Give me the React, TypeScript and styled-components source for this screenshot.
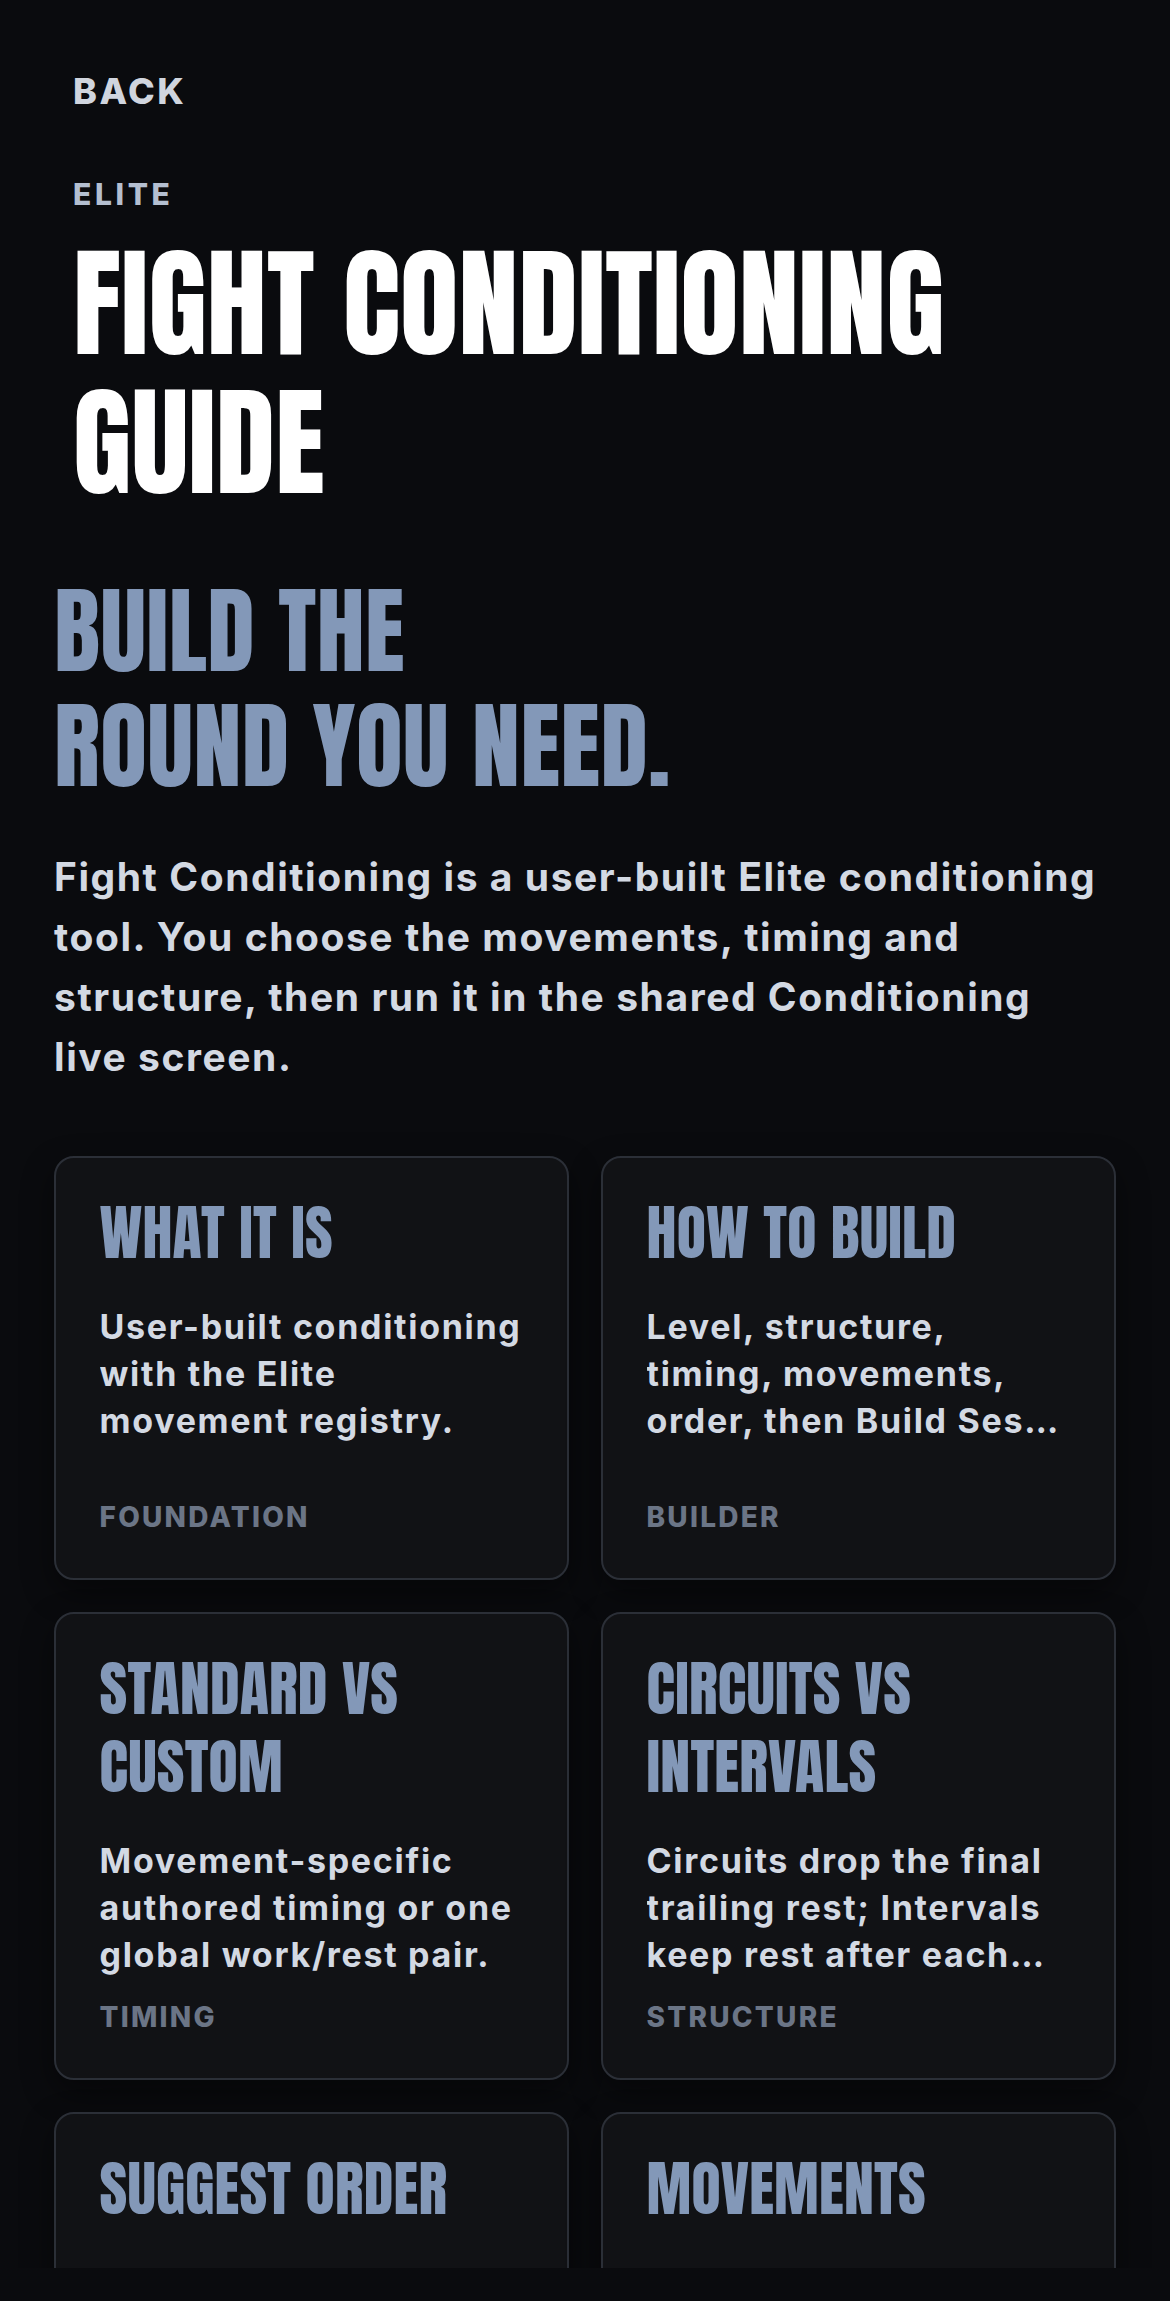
import React from 'react';
import styled, { createGlobalStyle } from 'styled-components';

const GlobalStyle = createGlobalStyle`
  html, body {
    margin: 0;
    padding: 0;
    background: #0a0b0e;
    overflow-x: hidden;
  }

  * {
    box-sizing: border-box;
  }
`;

const Screen = styled.div`
  width: 1170px;
  height: 2301px;
  background: #0a0b0e;
  display: flex;
  flex-direction: column;
  overflow: hidden;
`;

const ScrollArea = styled.main`
  height: 2268px;
  overflow: hidden;
  padding: 0 54px;
  flex: none;
`;

const SafeArea = styled.div`
  flex: 1;
  background: #0a0b0e;
`;

const Header = styled.header`
  padding: 69px 0 0 19px;
`;

const BackButton = styled.button`
  display: block;
  margin: 0;
  padding: 0;
  border: 0;
  background: none;
  font-family: Inter, 'Liberation Sans', sans-serif;
  font-weight: 800;
  font-size: 36px;
  line-height: 44px;
  letter-spacing: 0.07em;
  color: #d0d5de;
  cursor: pointer;
`;

const Eyebrow = styled.div`
  margin-top: 63px;
  font-family: Inter, 'Liberation Sans', sans-serif;
  font-weight: 800;
  font-size: 30px;
  line-height: 36px;
  letter-spacing: 0.12em;
  color: #b4bfd0;
`;

const PageTitle = styled.h1`
  margin: 22px 0 0;
  font-family: Anton, 'Oswald', 'Liberation Sans Narrow', sans-serif;
  font-weight: 400;
  font-size: 120px;
  line-height: 139px;
  letter-spacing: 0.2px;
  color: #ffffff;
  text-transform: uppercase;
`;

const Hero = styled.h2`
  margin: 61px 0 0;
  font-family: Anton, 'Oswald', 'Liberation Sans Narrow', sans-serif;
  font-weight: 400;
  font-size: 96px;
  line-height: 115px;
  letter-spacing: 0.5px;
  color: #8398b8;
  text-transform: uppercase;
`;

const Intro = styled.p`
  margin: 44px 0 0;
  max-width: 1050px;
  font-family: Inter, 'Liberation Sans', sans-serif;
  font-weight: 700;
  font-size: 39px;
  line-height: 60px;
  letter-spacing: 0.04em;
  color: #d3d9e3;
`;

const CardGrid = styled.section`
  margin-top: 69px;
  display: grid;
  grid-template-columns: repeat(2, minmax(0, 1fr));
  gap: 32px;
`;

const Card = styled.article`
  min-width: 0;
  min-height: 424px;
  display: flex;
  flex-direction: column;
  padding: 36px 37.5px 44px 43.5px;
  background: #111215;
  border: 2px solid #2b2f37;
  border-radius: 20px;
  box-shadow: 0 12px 32px rgba(0, 0, 0, 0.45);
`;

const CardTitle = styled.h3`
  margin: 0;
  font-family: Anton, 'Oswald', 'Liberation Sans Narrow', sans-serif;
  font-weight: 400;
  font-size: 60px;
  line-height: 78px;
  letter-spacing: 0.2px;
  color: #8398b8;
  text-transform: uppercase;
`;

const CardText = styled.p`
  margin: 31px 0 0;
  font-family: Inter, 'Liberation Sans', sans-serif;
  font-weight: 700;
  font-size: 34px;
  line-height: 47px;
  letter-spacing: 0.05em;
  color: #d3d9e3;
  display: -webkit-box;
  -webkit-box-orient: vertical;
  -webkit-line-clamp: 3;
  overflow: hidden;
  text-overflow: ellipsis;
`;

// keeps the tail of a sentence on one line so the clamp cuts it mid-word
const Unbroken = styled.span`
  white-space: nowrap;
`;

const CardTag = styled.div`
  margin-top: auto;
  padding-top: 22px;
  font-family: Inter, 'Liberation Sans', sans-serif;
  font-weight: 800;
  font-size: 28px;
  line-height: 34px;
  letter-spacing: 0.08em;
  color: #6b7586;
  text-transform: uppercase;
`;

type GuideCard = {
  title: React.ReactNode;
  text: React.ReactNode;
  tag: string;
};

const cards: GuideCard[] = [
  {
    title: 'What it is',
    text: 'User-built conditioning with the Elite movement registry.',
    tag: 'Foundation',
  },
  {
    title: 'How to build',
    text: (
      <>
        Level, structure, timing, movements,{' '}
        <Unbroken>order, then Build Session to start the live screen.</Unbroken>
      </>
    ),
    tag: 'Builder',
  },
  {
    title: (
      <>
        Standard vs
        <br />
        custom
      </>
    ),
    text: 'Movement-specific authored timing or one global work/rest pair.',
    tag: 'Timing',
  },
  {
    title: (
      <>
        Circuits vs
        <br />
        intervals
      </>
    ),
    text: 'Circuits drop the final trailing rest; Intervals keep rest after each movement, including the last.',
    tag: 'Structure',
  },
  {
    title: 'Suggest order',
    text: 'Reorder the selected movements into a balanced sequence before you build.',
    tag: 'Order',
  },
  {
    title: 'Movements',
    text: 'Browse every movement in the Elite registry by level and category.',
    tag: 'Registry',
  },
];

export default function App() {
  return (
    <>
      <GlobalStyle />
      <Screen>
        <ScrollArea>
          <Header>
            <BackButton type="button">BACK</BackButton>
            <Eyebrow>ELITE</Eyebrow>
            <PageTitle>
              Fight Conditioning
              <br />
              Guide
            </PageTitle>
          </Header>

          <Hero>
            Build the
            <br />
            round you need.
          </Hero>

          <Intro>
            Fight Conditioning is a user-built Elite conditioning tool. You choose the movements,
            timing and structure, then run it in the shared Conditioning live screen.
          </Intro>

          <CardGrid>
            {cards.map((card, i) => (
              <Card key={i}>
                <CardTitle>{card.title}</CardTitle>
                <CardText>{card.text}</CardText>
                <CardTag>{card.tag}</CardTag>
              </Card>
            ))}
          </CardGrid>
        </ScrollArea>
        <SafeArea />
      </Screen>
    </>
  );
}
